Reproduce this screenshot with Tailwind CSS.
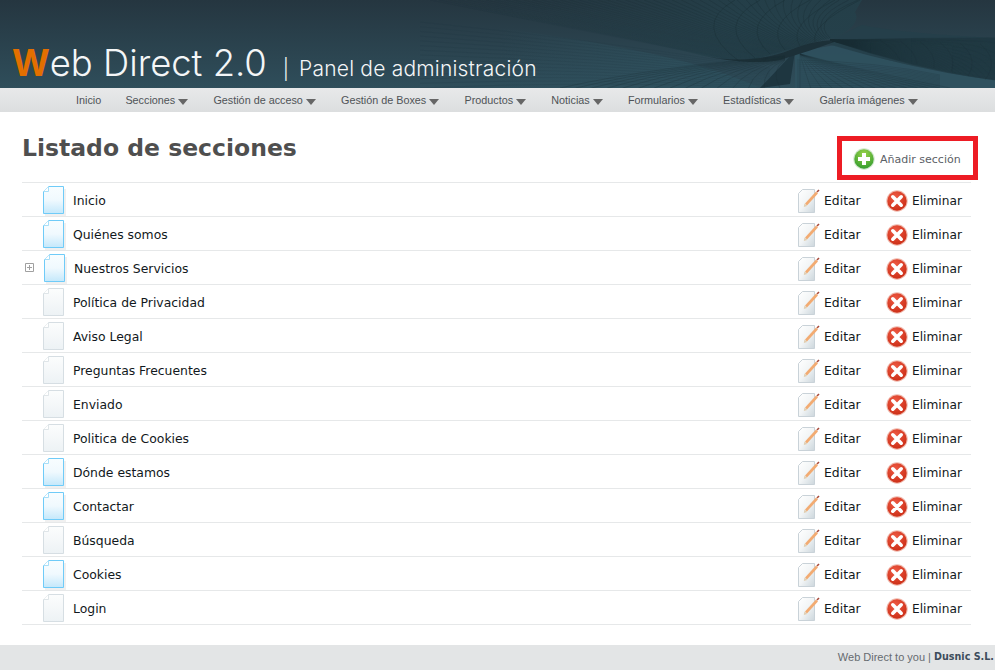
<!DOCTYPE html>
<html lang="es">
<head>
  <meta charset="UTF-8" />
  <title>Web Direct 2.0 | Panel de administración</title>
  <script src="https://cdn.jsdelivr.net/npm/@tailwindcss/browser@4"></script>
</head>
<body class="min-h-screen flex flex-col bg-white font-['DejaVu_Sans',sans-serif]">
  <svg class="absolute w-0 h-0">
    <defs>
      <linearGradient id="pageBlue" x1="0" y1="0" x2="0" y2="1"><stop offset="0" stop-color="#f8fdff"/><stop offset=".5" stop-color="#f0f9fe"/><stop offset="1" stop-color="#c4e8fb"/></linearGradient>
      <linearGradient id="pageGrey" x1="0" y1="0" x2="0" y2="1"><stop offset="0" stop-color="#fcfdfd"/><stop offset="1" stop-color="#edf2f5"/></linearGradient>
      <linearGradient id="pageEdit" x1="0" y1="0" x2="1" y2="1"><stop offset="0" stop-color="#ffffff"/><stop offset=".5" stop-color="#f2f5f6"/><stop offset="1" stop-color="#ccd6dc"/></linearGradient>
      <radialGradient id="redBall" cx=".4" cy=".3" r=".8"><stop offset="0" stop-color="#ee5a44"/><stop offset="1" stop-color="#c92a12"/></radialGradient>
      <radialGradient id="greenBall" cx=".5" cy=".25" r=".8"><stop offset="0" stop-color="#9bd34a"/><stop offset="1" stop-color="#2e9a2c"/></radialGradient>
      <linearGradient id="swooshFade" gradientUnits="userSpaceOnUse" x1="430" y1="0" x2="740" y2="0"><stop offset="0" stop-color="#22363f" stop-opacity="0"/><stop offset="1" stop-color="#24404a" stop-opacity=".85"/></linearGradient>
      <linearGradient id="litFade" gradientUnits="userSpaceOnUse" x1="500" y1="0" x2="760" y2="0"><stop offset="0" stop-color="#2f5360" stop-opacity="0"/><stop offset="1" stop-color="#2f5360" stop-opacity=".8"/></linearGradient>
      <symbol id="pageBlueIcon" viewBox="0 0 24 30">
        <rect x="3" y="3" width="21" height="27" fill="#f0f0f0"/>
        <path d="M6.500.5H21.500V27.500H1.500V5.500Z" fill="url(#pageBlue)" stroke="#6fcbf8"/>
        <path d="M1.500 5.500H6.500V.5" fill="#fff" stroke="#a6def8"/>
      </symbol>
      <symbol id="pageGreyIcon" viewBox="0 0 24 30">
        <path d="M6.500.5H21.500V27.500H1.500V5.500Z" fill="url(#pageGrey)" stroke="#d6dee3"/>
        <path d="M1.500 5.500H6.500V.5" fill="#fff" stroke="#dfe5e8"/>
      </symbol>
      <symbol id="editIcon" viewBox="0 0 24 26">
        <path d="M5.500 1.500H17.500V24.500H1.500V5.500Z" fill="url(#pageEdit)" stroke="#c9d2d8" stroke-linejoin="round"/>
        <path d="M9 16.500 20 4.500" stroke="#f2ab72" stroke-width="2.600"/>
        <path d="M20 4 22 2" stroke="#a84a3a" stroke-width="1.600"/>
        <path d="M6.800 19 7.500 15.500 10.200 18Z" fill="#e0cdb0"/>
      </symbol>
      <symbol id="delIcon" viewBox="0 0 22 22">
        <circle cx="11" cy="11" r="10.700" fill="#f0b7ab"/>
        <circle cx="11" cy="11" r="9.700" fill="url(#redBall)"/>
        <path d="M6.800 6.800 15.200 15.200M15.200 6.800 6.800 15.200" stroke="#fff" stroke-width="3.600" stroke-linecap="round"/>
      </symbol>
      <symbol id="addIcon" viewBox="0 0 22 22">
        <circle cx="11" cy="11" r="10.700" fill="#cfe6cb"/>
        <circle cx="11" cy="11" r="9.700" fill="url(#greenBall)"/>
        <path d="M11 5V17M5 11H17" stroke="#fff" stroke-width="4"/>
      </symbol>
    </defs>
  </svg>

  <header class="relative h-[88px] overflow-hidden bg-gradient-to-b from-[#253640] to-[#2f4e5b]">
    <svg id="mesh" class="absolute inset-0" width="995" height="88" viewBox="0 0 995 88"></svg>
    <div class="relative flex items-baseline h-full pt-[38px] pl-[12px] text-[#f4f6f7] font-['Inter',sans-serif] font-light">
      <span class="text-[36.4px] leading-[50px]"><b class="font-bold text-[#e36f00]">W</b>eb Direct 2.0</span>
      <span class="ml-[16px] text-[20px]">|</span>
      <span class="ml-[10px] text-[21px] tracking-[0.2px]">Panel de administración</span>
    </div>
  </header>

  <nav class="h-[24px] flex items-center pl-[76px] gap-[25.2px] bg-gradient-to-b from-[#e8e9ea] to-[#dcdedf] text-[10.8px] text-[#4f5357] font-['Liberation_Sans',sans-serif]">
    <a class="-mr-[1px]">Inicio</a>
    <a class="nav-item">Secciones</a>
    <a class="nav-item">Gestión de acceso</a>
    <a class="nav-item">Gestión de Boxes</a>
    <a class="nav-item">Productos</a>
    <a class="nav-item">Noticias</a>
    <a class="nav-item">Formularios</a>
    <a class="nav-item">Estadísticas</a>
    <a class="nav-item">Galería imágenes</a>
  </nav>

  <main class="flex-1 pl-[22px] pr-[24px]">
    <div class="flex justify-between h-[70px]">
      <h1 class="pt-[19px] text-[23.5px] leading-[34px] font-bold text-[#4f4f4f]">Listado de secciones</h1>
      <a class="mt-[24px] -mr-[7px] h-[44px] w-[141px] flex items-center pl-[11px] pt-[2px] gap-[5px] border-[5px] border-[#ed1c24] text-[11px] text-[#5b6066]">
        <svg class="w-[22px] h-[22px]"><use href="#addIcon"/></svg><span class="pt-[2px]">Añadir sección</span>
      </a>
    </div>
    <ul id="rows" class="border-t border-[#e6e8e9]"></ul>
  </main>

  <footer class="h-[25px] flex items-center justify-end pr-[1px] bg-[#e3e5e6] text-[11px] text-[#666b70] font-['Liberation_Sans',sans-serif]">
    Web Direct to you |&nbsp;<b class="font-['DejaVu_Sans',sans-serif] text-[9.6px] text-[#3d4d5c]">Dusnic S.L.</b>
  </footer>

  <script>
    const rows = [
      ["Inicio", 1], ["Quiénes somos", 1], ["Nuestros Servicios", 1, true],
      ["Política de Privacidad", 0], ["Aviso Legal", 0], ["Preguntas Frecuentes", 0],
      ["Enviado", 0], ["Politica de Cookies", 0], ["Dónde estamos", 1],
      ["Contactar", 1], ["Búsqueda", 0], ["Cookies", 1], ["Login", 0]
    ];
    document.getElementById("rows").innerHTML = rows.map(([name, blue, expand]) => `
      <li class="h-[34px] flex items-center border-b border-[#e6e8e9] text-[12.4px] text-[#111820]">
        <span class="w-[20px] ${expand ? "" : "invisible"}">
          <svg class="block ml-[3px]" width="9" height="9" viewBox="0 0 9 9"><path d="M.5.5h8v8h-8zM2 4.500h5M4.500 2v5" fill="none" stroke="#a0a0a0"/></svg>
        </span>
        <svg class="${expand ? "ml-[1px]" : ""} w-[24px] h-[30px] mt-[2px]"><use href="#${blue ? "pageBlueIcon" : "pageGreyIcon"}"/></svg>
        <span class="ml-[7px] pt-[4px]">${name}</span>
        <a class="ml-auto flex items-center gap-[3px] w-[88px]"><svg class="w-[24px] h-[26px] -ml-[1px] mt-[3px]"><use href="#editIcon"/></svg><span class="pt-[4px]">Editar</span></a>
        <a class="flex items-center gap-[4px] w-[85px]"><svg class="w-[22px] h-[22px] mt-[3px]"><use href="#delIcon"/></svg><span class="pt-[4px] text-[12.2px]">Eliminar</span></a>
      </li>`).join("");

    // little triangle after each menu entry
    document.querySelectorAll(".nav-item").forEach(a => {
      a.insertAdjacentHTML("beforeend", '<svg class="inline-block ml-[3px] align-[-1px]" width="10" height="6" viewBox="0 0 10 6"><path d="M0 0H10L5 6Z" fill="#666"/></svg>');
    });

    // wireframe surface of the banner
    const lerp = (a, b, t) => a + (b - a) * t;
    const line = (d, color, op) => `<path d="${d}" fill="none" stroke="${color}" stroke-width=".5" opacity="${op}"/>`;
    let mesh = "";
    // lit lower mesh
    mesh += '<path d="M500 28C620 45 700 60 760 88H500Z" fill="url(#litFade)"/>';
    mesh += '<path d="M795 52 835 45C880 60 950 75 995 80V88H795Z" fill="#2f5360" opacity=".8"/>';
    // upper swoosh and right band
    mesh += '<path d="M430 0C520 20 620 35 700 55C730 62 760 62 790 50C810 42 825 40 835 38C852 30 860 20 855 12L862 0Z" fill="url(#swooshFade)"/>';
    mesh += '<path d="M835 38 862 25C900 33 960 36 995 38V80C950 75 880 60 825 43Z" fill="#24404a" opacity=".85"/>';
    mesh += '<path d="M760 88 795 51 790 84Z" fill="#1e3640"/>';
    mesh += '<path d="M700 55C735 63 765 60 790 50C810 42 825 40 840 40C820 47 800 54 780 60C760 64 730 62 700 55Z" fill="#1c3038"/>';
    for (let i = 0; i <= 46; i++) {
      const t = i / 46;
      mesh += line(`M${lerp(430, 858, t)} 0Q${lerp(640, 810, t)} ${lerp(42, 20, t)} ${lerp(745, 830, t)} ${lerp(62, 38, t)}`, "#182a31", lerp(.2, .65, t));
      mesh += line(`M830 40Q910 ${lerp(38, 68, t)} 995 ${lerp(38, 80, t)}`, "#182a31", .6);
    }
    for (let i = 0; i <= 5; i++) {
      const t = i / 5;
      mesh += line(`M${lerp(735, 860, t)} 0Q${lerp(690, 810, t)} 25 ${lerp(740, 815, t)} ${lerp(62, 42, t)}`, "#182a31", .7);
      mesh += line(`M${lerp(880, 980, t)} ${lerp(40, 44, t)}Q${lerp(895, 1000, t)} ${lerp(50, 60, t)} ${lerp(900, 985, t)} ${lerp(60, 80, t)}`, "#182a31", .4);
    }
    for (let i = 0; i <= 14; i++) {
      const t = i / 14;
      mesh += line(`M${lerp(560, 780, t)} 88Q${lerp(660, 770, t)} ${lerp(66, 70, t)} 785 ${lerp(56, 60, t)}`, "#1b2e36", .6);
      mesh += line(`M420 ${lerp(22, 88, t)}Q600 ${lerp(40, 80, t)} 770 ${lerp(68, 88, t)}`, "#1f343d", .35);
      mesh += line(`M${lerp(800, 950, t)} 88Q${lerp(800, 860, t)} 70 800 54`, "#1b2e36", .5);
      mesh += line(`M797 ${lerp(60, 88, t)}Q880 ${lerp(62, 85, t)} 940 ${lerp(75, 92, t)}`, "#1b2e36", .45);
    }
    document.getElementById("mesh").innerHTML = mesh;
  </script>
</body>
</html>
